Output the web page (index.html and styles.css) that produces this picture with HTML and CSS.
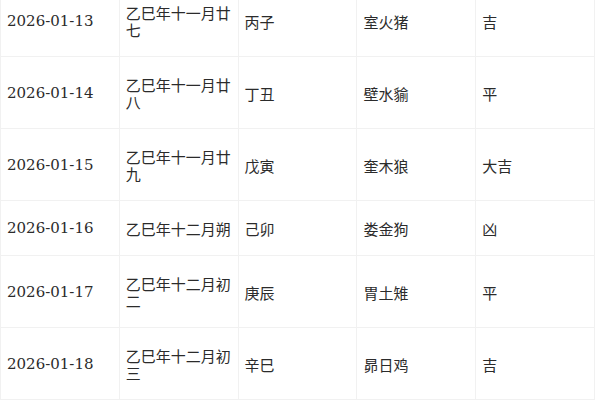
FILE: index.html
```html
<!DOCTYPE html>
<html lang="zh-CN">
<head>
<meta charset="utf-8">
<title>黄历</title>
<link rel="stylesheet" href="styles.css">
</head>
<body>
<table class="almanac">
  <tbody>
    <tr><td class="date">2026-01-13</td><td>乙巳年十一月廿七</td><td>丙子</td><td>室火猪</td><td>吉</td></tr>
    <tr><td class="date">2026-01-14</td><td>乙巳年十一月廿八</td><td>丁丑</td><td>壁水貐</td><td>平</td></tr>
    <tr><td class="date">2026-01-15</td><td>乙巳年十一月廿九</td><td>戊寅</td><td>奎木狼</td><td>大吉</td></tr>
    <tr><td class="date">2026-01-16</td><td>乙巳年十二月朔</td><td>己卯</td><td>娄金狗</td><td>凶</td></tr>
    <tr><td class="date">2026-01-17</td><td>乙巳年十二月初二</td><td>庚辰</td><td>胃土雉</td><td>平</td></tr>
    <tr><td class="date">2026-01-18</td><td>乙巳年十二月初三</td><td>辛巳</td><td>昴日鸡</td><td>吉</td></tr>
  </tbody>
</table>
</body>
</html>
```
FILE: styles.css
```css
html, body {
  margin: 0;
  padding: 0;
  background: #fff;
}
body {
  font-family: "Noto Sans CJK SC", "Noto Sans", sans-serif;
  color: #2b2b2b;
  overflow: hidden;
}
.almanac {
  width: 595px;
  margin-top: -16px;
  border-collapse: collapse;
  table-layout: fixed;
}
.almanac td {
  width: 20%;
  border: 1px solid #f1f1f1;
  padding: 19px 5px 18px 6px;
  font-size: 15px;
  line-height: 17px;
  vertical-align: middle;
  text-align: left;
}
.almanac td.date {
  font-family: "DejaVu Serif", serif;
  color: #2b2b2b;
}
```
